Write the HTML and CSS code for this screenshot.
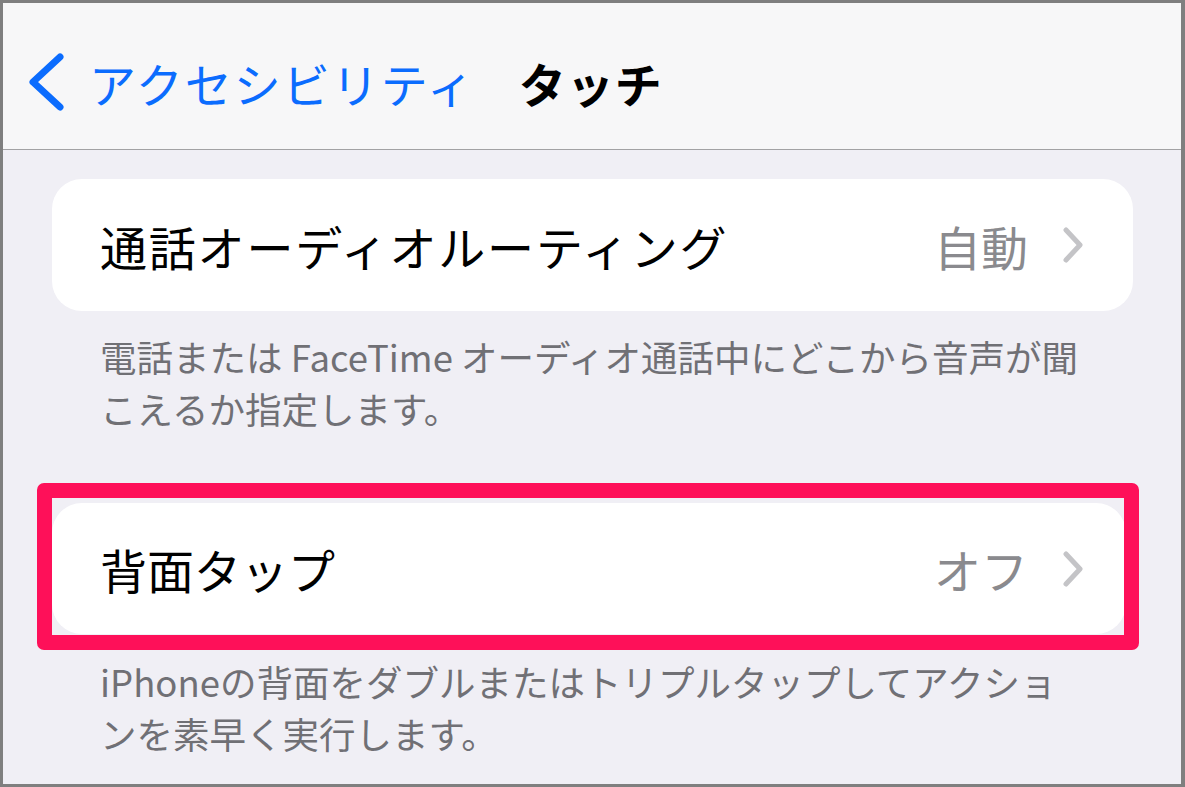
FILE: index.html
```html
<!DOCTYPE html>
<html lang="ja">
<head>
<meta charset="utf-8">
<title>タッチ</title>
<link rel="stylesheet" href="styles.css">
</head>
<body>
<div class="frame">
  <header class="navbar">
    <svg class="back-chevron" width="42" height="64" viewBox="0 0 42 64" aria-hidden="true">
      <polyline points="35,7 8,32 35,57" fill="none" stroke="#0b6cfe" stroke-width="7" stroke-linecap="round" stroke-linejoin="round"/>
    </svg>
    <span class="back-label">アクセシビリティ</span>
    <span class="nav-title">タッチ</span>
  </header>
  <main class="content">
    <div class="card card-first">
      <span class="row-label row-label-wide">通話オーディオルーティング</span>
      <span class="row-value">自動</span>
      <svg class="row-chevron" width="20" height="36" viewBox="0 0 20 36" aria-hidden="true">
        <polyline points="3,3 17,18 3,33" fill="none" stroke="#c4c4c7" stroke-width="5" stroke-linecap="round" stroke-linejoin="round"/>
      </svg>
    </div>
    <p class="footer footer-first">電話または FaceTime オーディオ通話中にどこから音声が聞<br>こえるか指定します。</p>
    <div class="highlight-wrap">
      <div class="card card-second">
        <span class="row-label">背面タップ</span>
        <span class="row-value">オフ</span>
        <svg class="row-chevron" width="20" height="36" viewBox="0 0 20 36" aria-hidden="true">
          <polyline points="3,3 17,18 3,33" fill="none" stroke="#c4c4c7" stroke-width="5" stroke-linecap="round" stroke-linejoin="round"/>
        </svg>
      </div>
      <div class="highlight"></div>
    </div>
    <p class="footer footer-second">iPhoneの背面をダブルまたはトリプルタップしてアクショ<br>ンを素早く実行します。</p>
  </main>
</div>
</body>
</html>
```

FILE: styles.css
```css
* {
  box-sizing: border-box;
}

html, body {
  margin: 0;
  padding: 0;
}

body {
  width: 1185px;
  height: 787px;
  overflow: hidden;
  font-family: "Noto Sans CJK JP", "Noto Sans", sans-serif;
  background: #f0eff5;
}

.frame {
  width: 1185px;
  height: 787px;
  border-style: solid;
  border-color: #7f7f7f;
  border-width: 3px 4px 3px 3px;
  background: #f0eff5;
  overflow: hidden;
  display: flex;
  flex-direction: column;
}

.navbar {
  height: 147px;
  flex: 0 0 auto;
  background: #f7f7f8;
  border-bottom: 1px solid #a2a2a4;
  display: flex;
  align-items: center;
  padding: 12px 0 0 22px;
}

.back-chevron {
  display: block;
  flex: 0 0 auto;
}

.back-label {
  margin-left: 22px;
  font-size: 47px;
  line-height: 1;
  letter-spacing: 2px;
  color: #0b6cfe;
  white-space: nowrap;
}

.nav-title {
  margin-left: 43px;
  font-size: 47px;
  line-height: 1;
  letter-spacing: 1px;
  font-weight: 700;
  color: #000;
  white-space: nowrap;
}

.content {
  flex: 1 1 auto;
  padding: 0 48px 0 49px;
}

.card {
  background: #fff;
  border-radius: 30px;
  display: flex;
  align-items: center;
  padding-left: 48px;
}

.card-first {
  margin-top: 29px;
  height: 132px;
  padding-right: 50px;
}

.card-second {
  height: 131px;
  width: 1074px;
  padding-right: 43px;
}

.row-label {
  flex: 1 1 auto;
  font-size: 47px;
  line-height: 1;
  color: #000;
  white-space: nowrap;
}

.row-label-wide {
  letter-spacing: 1.8px;
}

.row-value {
  font-size: 47px;
  line-height: 1;
  color: #8a8a8e;
  white-space: nowrap;
  margin-right: 35px;
}

.row-chevron {
  display: block;
  flex: 0 0 auto;
}

.footer {
  margin: 0;
  padding-left: 48px;
  font-size: 36.5px;
  line-height: 52px;
  color: #707075;
  white-space: nowrap;
}

.footer-first {
  margin-top: 20px;
}

.highlight-wrap {
  position: relative;
  margin-top: 68px;
}

.highlight {
  position: absolute;
  left: -15px;
  top: -20px;
  width: 1102px;
  height: 167px;
  border: 15px solid #fe1059;
  border-radius: 7px;
  pointer-events: none;
}

.footer-second {
  margin-top: 22px;
}
```
